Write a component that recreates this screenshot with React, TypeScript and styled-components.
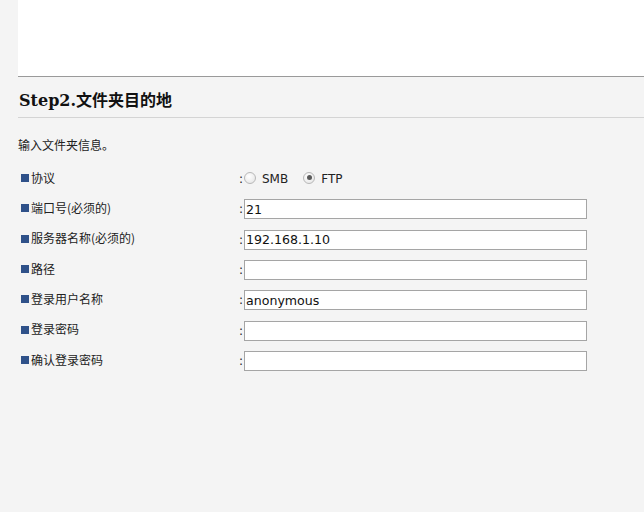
import React from "react";
import styled, { createGlobalStyle } from "styled-components";

const Global = createGlobalStyle`
  html, body { margin: 0; padding: 0; background: #f4f4f4; }
  body { font-family: "DejaVu Sans", "Noto Sans CJK SC", sans-serif; color: #222; }
  * { box-sizing: border-box; }
`;

const Page = styled.div`
  padding-left: 18px;
  min-height: 512px;
`;

const TopPanel = styled.div`
  height: 77px;
  background: #ffffff;
  border-bottom: 1px solid #9a9a9a;
`;

const Title = styled.h2`
  margin: 0;
  padding: 14px 0 0 1px;
  height: 41px;
  font-family: "DejaVu Serif", "Noto Sans CJK SC", serif;
  font-weight: bold;
  font-size: 16px;
  line-height: 20px;
  color: #111;
  border-bottom: 1px solid #d4d4d4;
`;

const Intro = styled.p`
  margin: 0;
  padding-top: 18px;
  height: 46px;
  font-family: "Noto Sans CJK SC", sans-serif;
  font-size: 12px;
  line-height: 17px;
  color: #222;
`;

const Form = styled.div`
  display: grid;
  grid-template-columns: 221px 1fr;
  grid-auto-rows: 30.33px;
  align-items: center;
`;

const Label = styled.div`
  display: flex;
  align-items: center;
  padding-left: 3px;
  margin-top: -3px;
  font-family: "Noto Sans CJK SC", sans-serif;
  font-size: 12px;
  line-height: 14px;
  color: #222;
`;

const Bullet = styled.span`
  width: 8px;
  height: 8px;
  background: #2f5189;
  margin-right: 2px;
  margin-top: 1px;
  flex: none;
`;

const Value = styled.div`
  display: flex;
  align-items: center;
`;

const Colon = styled.span`
  width: 5px;
  font-size: 12px;
  color: #222;
  font-family: "DejaVu Sans", sans-serif;
`;

const TextBox = styled.input`
  width: 343px;
  height: 20px;
  border: 1px solid #a5a5a5;
  background: #ffffff;
  padding: 0 1px;
  margin: 0;
  font-family: "DejaVu Sans", sans-serif;
  font-size: 12.6px;
  color: #111;
  outline: none;
`;

const RadioGroup = styled.div`
  display: flex;
  align-items: center;
`;

const Radio = styled.span<{ $checked?: boolean }>`
  width: 12px;
  height: 12px;
  border-radius: 50%;
  border: 1px solid #b8b8b8;
  background: radial-gradient(circle at 40% 35%, #ffffff, #e2e2e2);
  display: inline-flex;
  align-items: center;
  justify-content: center;
  margin-top: -3px;
  &::after {
    content: "";
    width: 5px;
    height: 5px;
    border-radius: 50%;
    background: ${(p) => (p.$checked ? "#5a5a5a" : "transparent")};
  }
`;

const RadioText = styled.span<{ $gap?: number }>`
  font-family: "DejaVu Sans", sans-serif;
  font-size: 12px;
  color: #222;
  margin-left: 6px;
  margin-right: ${(p) => p.$gap ?? 0}px;
`;

const fields: { label: string; value: string }[] = [
  { label: "端口号(必须的)", value: "21" },
  { label: "服务器名称(必须的)", value: "192.168.1.10" },
  { label: "路径", value: "" },
  { label: "登录用户名称", value: "anonymous" },
  { label: "登录密码", value: "" },
  { label: "确认登录密码", value: "" },
];

export default function App() {
  return (
    <>
      <Global />
      <Page>
        <TopPanel />
        <Title>Step2.文件夹目的地</Title>
        <Intro>输入文件夹信息。</Intro>
        <Form>
          <Label>
            <Bullet />
            协议
          </Label>
          <Value>
            <Colon>:</Colon>
            <RadioGroup>
              <Radio />
              <RadioText $gap={15}>SMB</RadioText>
              <Radio $checked />
              <RadioText>FTP</RadioText>
            </RadioGroup>
          </Value>
          {fields.map((f) => (
            <React.Fragment key={f.label}>
              <Label>
                <Bullet />
                {f.label}
              </Label>
              <Value>
                <Colon>:</Colon>
                <TextBox
                  type={f.label.includes("密码") ? "password" : "text"}
                  defaultValue={f.value}
                />
              </Value>
            </React.Fragment>
          ))}
        </Form>
      </Page>
    </>
  );
}
